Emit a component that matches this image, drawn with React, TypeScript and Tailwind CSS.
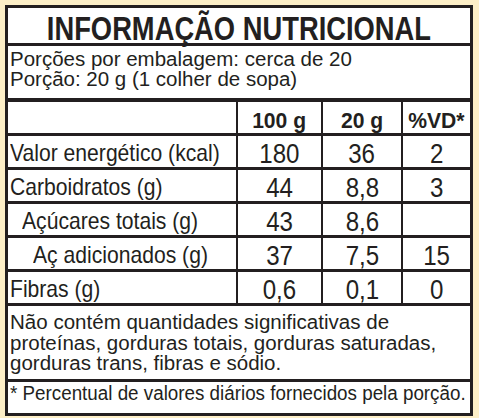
import React from "react";

const font = { fontFamily: '"Liberation Sans", Arial, Helvetica, sans-serif' };

const rows: { label: string; indent: string; a: string; b: string; c: string }[] = [
  { label: "Valor energético (kcal)", indent: "pl-[2px]", a: "180", b: "36", c: "2" },
  { label: "Carboidratos (g)", indent: "pl-[2px]", a: "44", b: "8,8", c: "3" },
  { label: "Açúcares totais (g)", indent: "pl-[14px]", a: "43", b: "8,6", c: "" },
  { label: "Aç adicionados (g)", indent: "pl-[25px]", a: "37", b: "7,5", c: "15" },
  { label: "Fibras (g)", indent: "pl-[2px]", a: "0,6", b: "0,1", c: "0" },
];

function Num({ v }: { v: string }) {
  return (
    <span className="inline-block whitespace-nowrap origin-center scale-x-[0.86] text-[28px] leading-none">{v}</span>
  );
}

export default function App() {
  return (
    <div className="w-[479px] h-[418px] bg-[#fdefc7] pt-[5px] pl-[5px]" style={font}>
      <div className="w-[468px] h-[411px] border-[3px] border-[#231f20] bg-white flex flex-col text-[#231f20] overflow-hidden">
        <div className="h-[38px] shrink-0 border-b-[3px] border-[#231f20] flex items-center justify-center pt-[4px]">
          <span className="inline-block whitespace-nowrap origin-center scale-x-[0.804] text-[34px] font-bold leading-none">
            INFORMAÇÃO NUTRICIONAL
          </span>
        </div>
        <div className="h-[56px] shrink-0 border-b-[4px] border-[#231f20] pl-[2px] pt-[3px] text-[20px] leading-[20px]">
          <div>
            <span className="inline-block whitespace-nowrap origin-left scale-x-[1.025]">Porções por embalagem: cerca de 20</span>
          </div>
          <div>
            <span className="inline-block whitespace-nowrap origin-left scale-x-[1.025]">Porção: 20 g (1 colher de sopa)</span>
          </div>
        </div>
        <div className="grid grid-cols-[230px_85px_80px_1fr] shrink-0">
          <div className="h-[34px] border-b-[3px] border-r-[2px] border-[#231f20]"></div>
          <div className="h-[34px] border-b-[3px] border-r-[2px] border-[#231f20] flex items-center justify-center pt-[6px]">
            <span className="inline-block whitespace-nowrap origin-center scale-x-[0.96] text-[22px] font-bold leading-none">100 g</span>
          </div>
          <div className="h-[34px] border-b-[3px] border-r-[2px] border-[#231f20] flex items-center justify-center pt-[6px]">
            <span className="inline-block whitespace-nowrap origin-center scale-x-[0.96] text-[22px] font-bold leading-none">20 g</span>
          </div>
          <div className="h-[34px] border-b-[3px] border-[#231f20] flex items-center justify-center pt-[6px]">
            <span className="inline-block whitespace-nowrap origin-center scale-x-[0.96] text-[22px] font-bold leading-none">%VD*</span>
          </div>
          {rows.map((r) => (
            <React.Fragment key={r.label}>
              <div className={`h-[34px] border-b-[3px] border-r-[2px] border-[#231f20] flex items-center pt-[2px] ${r.indent}`}>
                <span className="inline-block whitespace-nowrap origin-left scale-x-[0.88] text-[24px] leading-none">{r.label}</span>
              </div>
              <div className="h-[34px] border-b-[3px] border-r-[2px] border-[#231f20] flex items-center justify-center pt-[4px]">
                <Num v={r.a} />
              </div>
              <div className="h-[34px] border-b-[3px] border-r-[2px] border-[#231f20] flex items-center justify-center pt-[4px]">
                <Num v={r.b} />
              </div>
              <div className="h-[34px] border-b-[3px] border-[#231f20] flex items-center justify-center pt-[4px]">
                <Num v={r.c} />
              </div>
            </React.Fragment>
          ))}
        </div>
        <div className="h-[76px] shrink-0 border-b-[3px] border-[#231f20] pl-[2px] pt-[6px] text-[20px] leading-[20.5px]">
          <div>
            <span className="inline-block whitespace-nowrap origin-left scale-x-[1.027]">Não contém quantidades significativas de</span>
          </div>
          <div>
            <span className="inline-block whitespace-nowrap origin-left scale-x-[1.025]">proteínas, gorduras totais, gorduras saturadas,</span>
          </div>
          <div>
            <span className="inline-block whitespace-nowrap origin-left scale-x-[1.025]">gorduras trans, fibras e sódio.</span>
          </div>
        </div>
        <div className="flex-1 pl-[2px] pt-[1px] text-[20px] leading-[20px]">
          <span className="inline-block whitespace-nowrap origin-left scale-x-[0.94]">* Percentual de valores diários fornecidos pela porção.</span>
        </div>
      </div>
    </div>
  );
}
